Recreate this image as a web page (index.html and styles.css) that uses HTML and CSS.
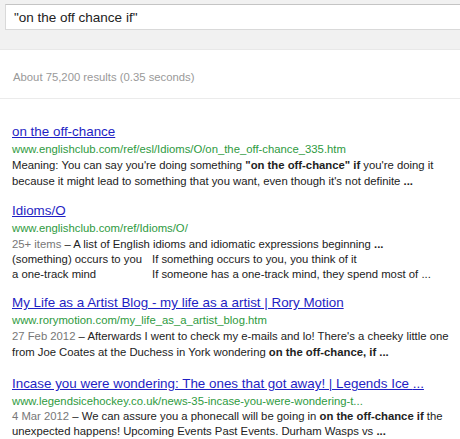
FILE: index.html
```html
<!DOCTYPE html>
<html>
<head>
<meta charset="utf-8">
<link rel="stylesheet" href="styles.css">
</head>
<body>
<div class="topbar">
  <div class="searchbox">"on the off chance if"</div>
</div>
<div class="stats">About 75,200 results (0.35 seconds)</div>
<div class="results">
  <div class="result">
    <a class="title" href="#">on the off-chance</a>
    <div class="url">www.englishclub.com/ref/esl/Idioms/O/on_the_off-chance_335.htm</div>
    <div class="snippet">Meaning: You can say you're doing something <b>"on the off-chance" if</b> you're doing it<br>because it might lead to something that you want, even though it's not definite <b>...</b></div>
  </div>
  <div class="result">
    <a class="title" href="#">Idioms/O</a>
    <div class="url">www.englishclub.com/ref/Idioms/O/</div>
    <div class="snippet"><span class="date">25+ items</span> – A list of English idioms and idiomatic expressions beginning <b>...</b></div>
    <div class="table">
      <div>(something) occurs to you</div><div>If something occurs to you, you think of it</div>
      <div>a one-track mind</div><div>If someone has a one-track mind, they spend most of ...</div>
    </div>
  </div>
  <div class="result wide">
    <a class="title" href="#">My Life as a Artist Blog - my life as a artist | Rory Motion</a>
    <div class="url">www.rorymotion.com/my_life_as_a_artist_blog.htm</div>
    <div class="snippet"><span class="date">27 Feb 2012</span> – Afterwards I went to check my e-mails and lo! There's a cheeky little one<br>from Joe Coates at the Duchess in York wondering <b>on the off-chance, if ...</b></div>
  </div>
  <div class="result">
    <a class="title" href="#">Incase you were wondering: The ones that got away! | Legends Ice <b>...</b></a>
    <div class="url">www.legendsicehockey.co.uk/news-35-incase-you-were-wondering-t...</div>
    <div class="snippet tight"><span class="date">4 Mar 2012</span> – We can assure you a phonecall will be going in <b>on the off-chance if</b> the<br>unexpected happens! Upcoming Events Past Events. Durham Wasps vs <b>...</b></div>
  </div>
</div>
</body>
</html>
```

FILE: styles.css
```css
html, body {
  margin: 0;
  padding: 0;
  background: #fff;
  font-family: "Liberation Sans", Arial, sans-serif;
  overflow: hidden;
}
.topbar {
  background: #f1f1f1;
  height: 45px;
  padding: 4px 0 0 5px;
  border-bottom: 1px solid #e8e8e8;
}
.searchbox {
  height: 24px;
  line-height: 25px;
  background: #fff;
  border: 1px solid #d9d9d9;
  border-top-color: #c4c4c4;
  margin-right: -20px;
  padding-left: 8px;
  font-size: 13.5px;
  color: #222;
}
.stats {
  height: 49px;
  line-height: 54px;
  padding-left: 13px;
  font-size: 11.3px;
  color: #999;
  border-bottom: 1px solid #ebebeb;
  box-sizing: border-box;
}
.results {
  padding: 24px 8px 0 12px;
  white-space: nowrap;
}
.result {
  margin-bottom: 13px;
}
.result.wide {
  margin-bottom: 15px;
}
.title {
  display: block;
  font-size: 13.4px;
  line-height: 18px;
  color: #1f1fc4;
  text-decoration: underline;
}
.title b { font-weight: normal; }
.url {
  font-size: 11.3px;
  line-height: 16px;
  color: #2e9a3e;
}
.snippet {
  font-size: 11.3px;
  line-height: 16px;
  color: #222;
}
.snippet.tight {
  line-height: 15px;
}
.date {
  color: #777;
}
.table {
  display: grid;
  grid-template-columns: 140px auto;
  font-size: 11.3px;
  line-height: 14.5px;
  color: #222;
}
```
